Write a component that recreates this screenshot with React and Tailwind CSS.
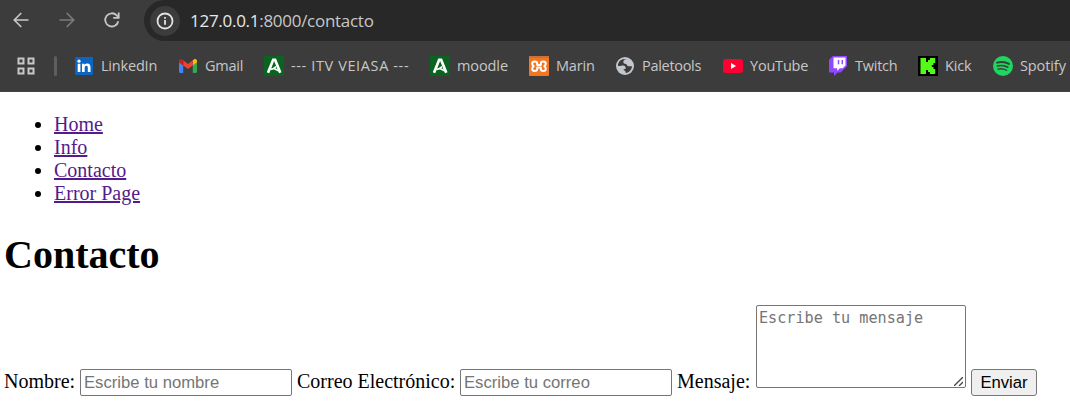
import React from "react";

function BackIcon() {
  return (
    <svg className="size-[18px]" viewBox="0 0 18 18" fill="none" stroke="currentColor" strokeWidth="1.7">
      <path d="M16.500 9H2.500M9.300 2L2.300 9l7 7" />
    </svg>
  );
}

function ReloadIcon() {
  return (
    <svg className="size-[18px]" viewBox="0 0 18 18" fill="none" stroke="currentColor" strokeWidth="1.8">
      <path d="M15.300 10.200A6.600 6.600 0 1 1 13.700 4.400l1.700 1.800" />
      <path d="M15.700 1.400v5.500h-5.500" />
    </svg>
  );
}

function InfoIcon() {
  return (
    <svg className="size-[18px]" viewBox="0 0 18 18" fill="none" stroke="#e3e3e3" strokeWidth="1.8">
      <circle cx="9" cy="9" r="7.500" />
      <path d="M9 8v4.800M9 4.900v1.900" />
    </svg>
  );
}

function AppsIcon() {
  return (
    <svg className="size-5 shrink-0" viewBox="0 0 20 20" fill="none" stroke="#c7c7c7" strokeWidth="2">
      <rect x="2.500" y="2.500" width="5" height="5" />
      <rect x="12.500" y="2.500" width="5" height="5" />
      <rect x="2.500" y="12.500" width="5" height="5" />
      <rect x="12.500" y="12.500" width="5" height="5" />
    </svg>
  );
}

function LinkedInIcon() {
  return (
    <svg className="size-5" viewBox="0 0 20 20">
      <rect x="1" y="1" width="18" height="18" rx="1.200" fill="#0a66c2" />
      <g fill="#fff">
        <circle cx="5" cy="5.200" r="1.600" />
        <path d="M3.700 7.800h2.700V16H3.700zM8 7.800h2.600v1.100c.5-.8 1.400-1.400 2.700-1.400 2.600 0 3.200 1.700 3.200 4V16h-2.700v-4c0-1 0-2.200-1.400-2.200s-1.700 1-1.700 2.100V16H8z" />
      </g>
    </svg>
  );
}

function GmailIcon() {
  return (
    <svg className="size-5" viewBox="0 0 20 20">
      <path d="M1 6v9.700c0 .7.5 1.200 1.200 1.200h3V9z" fill="#4285f4" />
      <path d="M19 6v9.700c0 .7-.5 1.200-1.200 1.200h-3V9z" fill="#34a853" />
      <path d="M14.800 4.600V9.500L19 6.300V4.900c0-1.800-1.900-2.600-3.200-1.500z" fill="#fbbc04" />
      <path d="M5.200 9.500V4.300L10 8l4.800-3.700v5.200L10 13z" fill="#ea4335" />
      <path d="M1 4.900v1.400l4.200 3.200V4.300l-1-.9C2.900 2.300 1 3.100 1 4.900z" fill="#c5221f" />
    </svg>
  );
}

function JuntaIcon() {
  return (
    <svg className="size-5" viewBox="0 0 20 20">
      <path d="M0 0h20v20H0z" fill="#08641f" />
      <path d="M4 16.800L9.200 3.800h1.900l5.200 13" fill="none" stroke="#fff" strokeWidth="2.700" />
      <path d="M6.800 13.400c2.500-.2 4.200-1.400 5.200-3M9 12l6 3" fill="none" stroke="#fff" strokeWidth="1.700" />
    </svg>
  );
}

function XamppIcon() {
  return (
    <svg className="size-5" viewBox="0 0 20 20">
      <rect width="20" height="20" rx="1" fill="#f37623" />
      <path d="M0 1h20" stroke="#c9713c" strokeWidth="2" />
      <path
        d="M5.700 5.400c1.700 0 2.500 1 2.500 2.200v1.300h3.600V7.600c0-1.200.8-2.200 2.500-2.200s2.500 1.100 2.500 2.300-.7 1.900-1.500 2.500c.8.600 1.500 1.300 1.500 2.500s-.8 2.300-2.500 2.300-2.500-1-2.500-2.200v-1.300H8.200v1.300c0 1.200-.8 2.200-2.500 2.200s-2.500-1.100-2.500-2.300.7-1.900 1.500-2.500c-.8-.6-1.500-1.300-1.500-2.500s.8-2.300 2.500-2.300z"
        fill="none"
        stroke="#fff"
        strokeWidth="2"
        strokeLinejoin="round"
      />
    </svg>
  );
}

function GlobeIcon() {
  return (
    <svg className="size-5" viewBox="0 0 20 20">
      <circle cx="10" cy="10" r="9" fill="#c3c7cb" />
      <path
        d="M11.500 3C9.500 3.600 8.300 4.400 8.300 6c0 1.500 1.500 1.700 2.500 1.900 1.300.3 1 1.500 1.900 2.100 1.100.7 2.700 0 4.300.2-.2 3.200-2.500 6.200-6.200 6.800-.5-.9.100-1.800-1-2.300l-1.300-.6c-.3-.8 1.700-.7 2.100-1.500.6-1.400-.9-3-2.600-3-1.900 0-3 .7-5 .4C3 6.500 6.500 2.400 11.500 3z"
        fill="#3c3c3c"
      />
      <path d="M9.200 2.900C5.500 3.200 3.300 6 3 9.300c1.600.3 3-.2 4.500-.3C6 7.400 6.300 4.700 9.200 2.900z" fill="#3c3c3c" />
    </svg>
  );
}

function YouTubeIcon() {
  return (
    <svg className="size-5" viewBox="0 0 20 20">
      <rect x="0" y="3" width="20" height="14" rx="3.300" fill="#ff0033" />
      <path d="M8 7.100v5.800l5.100-2.900z" fill="#fff" />
    </svg>
  );
}

function TwitchIcon() {
  return (
    <svg className="size-5" viewBox="0 0 20 20">
      <path d="M4.800 0H19v10.200l-6.300 6.200H9.500L6 20v-3.600H1V3.700z" fill="#9146ff" />
      <path d="M5.500 1.500h12v8l-2.800 2.800h-2.900L9.200 15v-2.700H5.500z" fill="#fff" />
      <path d="M10.500 4.100v4.200M14.300 4.100v4.200" stroke="#9146ff" strokeWidth="1.500" />
    </svg>
  );
}

function KickIcon() {
  return (
    <svg className="size-5" viewBox="0 0 20 20">
      <path d="M0 0h20v20H0z" fill="#000" />
      <path d="M2.500 2H8v4h2V4h2V2h5.200v5h-1.700v2h-1.700v2h1.700v2h1.700v5H12v-2h-2v-2H8v4H2.500z" fill="#53fc18" />
    </svg>
  );
}

function SpotifyIcon() {
  return (
    <svg className="size-5" viewBox="0 0 20 20">
      <circle cx="10" cy="10" r="10" fill="#1ed760" />
      <g fill="none" stroke="#3c3c3c" strokeLinecap="round">
        <path d="M4 6.700c4-1.200 8.500-.8 12 1.200" strokeWidth="1.900" />
        <path d="M4.500 10c3.500-1 7.200-.6 10.300 1.200" strokeWidth="1.600" />
        <path d="M4.900 13.100c3-.7 6-.4 8.700 1.200" strokeWidth="1.300" />
      </g>
    </svg>
  );
}

const bookmarks = [
  { label: "LinkedIn", Icon: LinkedInIcon, slot: "w-[104px]", track: "tracking-[-0.2px]" },
  { label: "Gmail", Icon: GmailIcon, slot: "w-[86px]", track: "tracking-[-0.25px]" },
  { label: "--- ITV VEIASA ---", Icon: JuntaIcon, slot: "w-[166px]", track: "tracking-[0.62px]" },
  { label: "moodle", Icon: JuntaIcon, slot: "w-[99px]", track: "tracking-[-0.1px]" },
  { label: "Marin", Icon: XamppIcon, slot: "w-[86px]", track: "tracking-[-0.2px]" },
  { label: "Paletools", Icon: GlobeIcon, slot: "w-[108px]", track: "tracking-[-0.3px]" },
  { label: "YouTube", Icon: YouTubeIcon, slot: "w-[105px]", track: "tracking-[-0.2px]" },
  { label: "Twitch", Icon: TwitchIcon, slot: "w-[90px]", track: "tracking-[-0.25px]" },
  { label: "Kick", Icon: KickIcon, slot: "w-[75px]", track: "tracking-[-0.2px]" },
  { label: "Spotify", Icon: SpotifyIcon, slot: "w-[77px]", track: "tracking-[-0.1px]" },
];

const links = ["Home", "Info", "Contacto", "Error Page"];

const inputClass =
  "h-[27px] w-[212px] rounded-[2px] border border-[#767676] bg-white px-[3px] font-['Liberation_Sans',Arial,sans-serif] text-[16.67px] leading-[19px] placeholder:text-[#757575] outline-none";

export default function App() {
  return (
    <div className="h-[415px] w-[1070px] overflow-hidden bg-white text-black">
      <header className="h-[92px] border-b border-[#464446] bg-[#3c3c3c] font-['Open_Sans','Noto_Sans',sans-serif]">
        <div className="flex h-[41px] items-center">
          <div className="flex h-[39px] w-[144px] items-center self-start pl-[12px]">
            <button className="text-[#c7c7c7]"><BackIcon /></button>
            <button className="ml-[28px] rotate-180 text-[#7b7b7b]"><BackIcon /></button>
            <button className="ml-[27px] text-[#c7c7c7]"><ReloadIcon /></button>
          </div>
          <div className="flex h-[41px] flex-1 items-center rounded-l-full bg-[#282828] pl-1.5">
            <span className="flex size-[30px] items-center justify-center rounded-full bg-[#3c3c3c]">
              <InfoIcon />
            </span>
            <span className="ml-[10px] whitespace-nowrap text-[17px] tracking-[-0.28px] text-[#c7c7c7]">
              <span className="text-[#e8e8e8]">127.0.0.1</span>:8000/contacto
            </span>
          </div>
        </div>
        <nav className="flex h-[50px] items-center pl-4">
          <AppsIcon />
          <span className="ml-[18px] mr-[17px] h-5 w-[3px] shrink-0 rounded-full bg-[#5e5e5e]" />
          {bookmarks.map(({ label, Icon, slot, track }) => (
            <div key={label} className={`flex shrink-0 items-center gap-[7px] ${slot}`}>
              <Icon />
              <span className={`whitespace-nowrap text-[14.5px] leading-5 text-[#c7c7c7] ${track}`}>{label}</span>
            </div>
          ))}
        </nav>
      </header>

      <main className="pl-1 font-['Liberation_Serif','Times_New_Roman',serif] text-[20px] leading-[23px]">
        <ul className="mt-[21px] list-disc pl-[50px]">
          {links.map((l) => (
            <li key={l}>
              <a href="#" className="text-[#551a8b] underline">{l}</a>
            </li>
          ))}
        </ul>
        <h1 className="mt-[27px] text-[40px] leading-[46px] font-bold">Contacto</h1>
        <form className="mt-[27px] flex items-end whitespace-nowrap">
          <label className="w-[76px] pb-[3px]">Nombre:</label>
          <input className={inputClass} placeholder="Escribe tu nombre" />
          <label className="ml-[5px] w-[163px] pb-[3px]">Correo Electrónico:</label>
          <input className={inputClass} placeholder="Escribe tu correo" />
          <label className="ml-[5px] w-[79px] pb-[3px]">Mensaje:</label>
          <div className="relative mb-2 h-[83px] w-[210px]">
            <textarea
              className="block h-full w-full resize-none rounded-[2px] border border-[#767676] bg-white px-[2px] py-[2px] font-['DejaVu_Sans_Mono',monospace] text-[15.17px] leading-5 placeholder:text-[#757575] outline-none"
              placeholder="Escribe tu mensaje"
            />
            <svg className="absolute right-[3px] bottom-[2px] size-[9px]" viewBox="0 0 9 9" stroke="#444" strokeWidth="1.300">
              <path d="M0 9L9 0M5 9l4-4" />
            </svg>
          </div>
          <button
            type="button"
            className="ml-[5px] h-[27px] w-[66px] rounded-[3px] border border-[#767676] bg-[#efefef] font-['Liberation_Sans',Arial,sans-serif] text-[16.67px] leading-[19px]"
          >
            Enviar
          </button>
        </form>
      </main>
    </div>
  );
}
